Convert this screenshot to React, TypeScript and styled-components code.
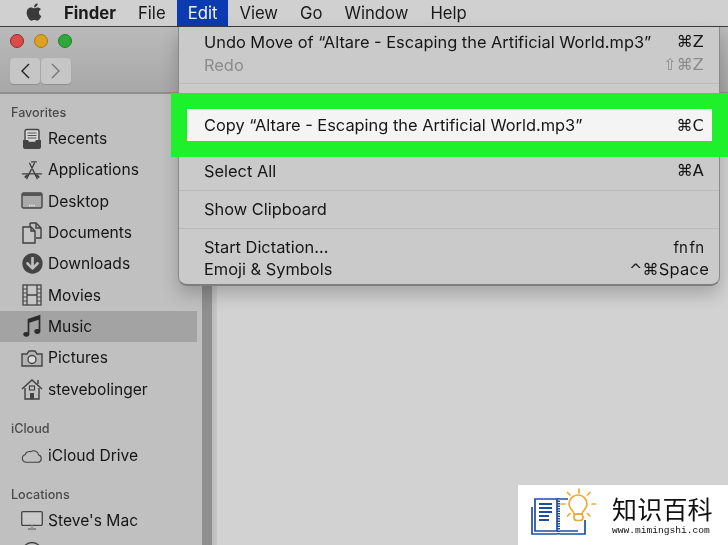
import React from "react";
import styled, { createGlobalStyle } from "styled-components";
import { FaApple, FaArrowCircleDown } from "react-icons/fa";

const Global = createGlobalStyle`
  html, body { margin: 0; padding: 0; background: #cfcfcf; }
  #root { width: 728px; height: 545px; overflow: hidden; position: relative; }
  * { box-sizing: border-box; }
`;

const Page = styled.div`
  width: 728px;
  height: 545px;
  display: flex;
  flex-direction: column;
  position: relative;
  overflow: hidden;
  background: #cfcfcf;
  color: #141414;
  font-family: Inter, "Liberation Sans", sans-serif;
  filter: blur(0.3px);
`;

const MenuBar = styled.div`
  height: 26px;
  flex: none;
  display: flex;
  align-items: stretch;
  padding-left: 25px;
  background: #d0d0d0;
  font-size: 16.7px;
`;

const AppleMark = styled.div`
  width: 29px;
  display: flex;
  align-items: center;
  color: #3a3a3a;
  font-size: 20px;
  margin-top: -2px;
  margin-left: -1px;
  padding-right: 0;
  flex: none;
`;

const MenuTitle = styled.div<{ $bold?: boolean; $active?: boolean }>`
  display: flex;
  align-items: center;
  padding: 0 11px;
  font-weight: ${(p) => (p.$bold ? 700 : 400)};
  background: ${(p) => (p.$active ? "#0c3ab0" : "transparent")};
  color: ${(p) => (p.$active ? "#f2f2f2" : "#1a1a1a")};
`;

const Window = styled.div`
  flex: 1;
  display: flex;
  flex-direction: column;
  min-height: 0;
  border-top: 1px solid #3c3c3c;
`;

const Toolbar = styled.div`
  height: 67px;
  flex: none;
  padding: 7px 10px 0;
  background: linear-gradient(#bababa, #a8a8a8);
  border-bottom: 2px solid #8f8f8f;
  display: flex;
  flex-direction: column;
  gap: 10px;
`;

const Lights = styled.div`
  display: flex;
  gap: 10px;
`;

const Light = styled.div<{ $c: string; $b: string }>`
  width: 14px;
  height: 14px;
  border-radius: 50%;
  background: ${(p) => p.$c};
  border: 1px solid ${(p) => p.$b};
`;

const NavGroup = styled.div`
  display: flex;
  gap: 1px;
`;

const NavButton = styled.div`
  width: 30px;
  height: 26px;
  border-radius: 4px;
  background: #c6c6c6;
  box-shadow: 0 1px 1px #8e8e8e;
  display: flex;
  align-items: center;
  justify-content: center;
`;

const Main = styled.div`
  flex: 1;
  display: flex;
  min-height: 0;
`;

const Sidebar = styled.div`
  width: 202px;
  flex: none;
  background: #c0c0c0;
  padding-top: 11px;
  display: flex;
  flex-direction: column;
`;

const Heading = styled.div<{ $gap?: number; $mb?: number }>`
  height: 16px;
  line-height: 16px;
  padding-left: 11px;
  margin-top: ${(p) => p.$gap ?? 0}px;
  margin-bottom: ${(p) => p.$mb ?? 2}px;
  font-size: 12.6px;
  font-weight: 500;
  color: #4a4a4a;
`;

const SideRow = styled.div<{ $selected?: boolean }>`
  height: 31.3px;
  flex: none;
  margin-right: 5px;
  padding-left: 21px;
  display: flex;
  align-items: center;
  gap: 5px;
  font-size: 15.6px;
  background: ${(p) => (p.$selected ? "#a3a3a3" : "transparent")};
  color: #161616;
`;

const IconSlot = styled.div`
  width: 22px;
  height: 22px;
  flex: none;
  display: flex;
  align-items: center;
  justify-content: center;
  color: #444;
`;

const Splitter = styled.div`
  width: 15px;
  flex: none;
  background: linear-gradient(to right, #8f8f8f 0, #8f8f8f 10px, #bdbdbd 10px, #c6c6c6 15px);
`;

const Content = styled.div`
  flex: 1;
  background: #d2d2d2;
`;

const Dropdown = styled.div`
  position: absolute;
  left: 178px;
  top: 27px;
  width: 542px;
  height: 259px;
  padding-top: 3px;
  background: #cacaca;
  border-radius: 0 0 9px 9px;
  border-left: 1px solid #8a8a8a;
  border-right: 1px solid #8a8a8a;
  border-bottom: 2px solid #7e7e7e;
  box-shadow: 0 8px 18px rgba(0, 0, 0, 0.22);
  font-size: 16.4px;
`;

const Item = styled.div<{ $h?: number; $dim?: boolean }>`
  height: ${(p) => p.$h ?? 23}px;
  display: flex;
  align-items: center;
  justify-content: space-between;
  padding: 0 15px 0 25px;
  color: ${(p) => (p.$dim ? "#8b8b8b" : "#161616")};
`;

const Highlighted = styled(Item)`
  height: 32px;
  margin: 25px 7px 18px 8px;
  padding: 0 8px 0 17px;
  background: #f4f4f4;
  box-shadow: 0 0 0 16px #1ff02c;
  position: relative;
`;

const Separator = styled.div<{ $mt?: number; $mb?: number }>`
  height: 1px;
  background: #bababa;
  margin-top: ${(p) => p.$mt ?? 8}px;
  margin-bottom: ${(p) => p.$mb ?? 6}px;
`;

const Shortcut = styled.span<{ $shift?: number }>`
  font-family: "DejaVu Sans", Inter, sans-serif;
  font-size: 16px;
  margin-right: ${(p) => -(p.$shift ?? 0)}px;
  letter-spacing: 0.2px;
`;

const Latin = styled.span`
  font-family: Inter, "Liberation Sans", sans-serif;
  font-size: 16.5px;
`;

const FnKeys = styled.span`
  font-family: Inter, "Liberation Sans", sans-serif;
  font-size: 15px;
  word-spacing: -2.5px;
  margin-right: 0;
`;

const Watermark = styled.div`
  position: absolute;
  right: 0;
  bottom: 0;
  width: 210px;
  height: 60px;
  background: #fff;
  display: flex;
  align-items: center;
  padding-left: 12px;
  gap: 16px;
`;

const BrandText = styled.div`
  display: flex;
  flex-direction: column;
  color: #111;
`;

const BrandName = styled.div`
  font-family: "Noto Sans CJK SC", sans-serif;
  font-size: 25px;
  line-height: 28px;
  letter-spacing: 0.2px;
  font-weight: 400;
`;

const BrandUrl = styled.div`
  font-family: "Liberation Mono", monospace;
  font-size: 9.6px;
  line-height: 12px;
  margin-top: 3px;
`;

const stroke = { fill: "none", stroke: "#3f3f3f", strokeWidth: 1.4 };

const Recents = () => (
  <svg width="20" height="22" viewBox="0 0 20 22">
    <rect x="3" y="1.5" width="14" height="13" rx="1.5" fill="#d8d8d8" stroke="#444" strokeWidth="1.4" />
    <path d="M5.5 5h9M5.5 7.5h9M5.5 10h9" stroke="#555" strokeWidth="1.1" />
    <path d="M1 12h5l1 2h6l1-2h5v7a2 2 0 0 1-2 2H3a2 2 0 0 1-2-2z" fill="#444" />
  </svg>
);
const Apps = () => (
  <svg width="23" height="22" viewBox="0 0 23 22">
    <path d="M6 20 L14 4M17 20 L9 4M1.5 15h20M11 2.5h5" {...stroke} strokeLinecap="round" />
    <path d="M4 19l3-3M19 19l-3-3" {...stroke} strokeWidth={2} />
  </svg>
);
const Desktop = () => (
  <svg width="22" height="18" viewBox="0 0 22 18">
    <rect x="1" y="1" width="20" height="15" rx="1.5" fill="#aaa" stroke="#444" strokeWidth="1.4" />
    <rect x="1" y="1" width="20" height="3" fill="#555" />
    <path d="M8 13.5h6" stroke="#eee" strokeWidth="1.3" strokeDasharray="1.3 1" />
  </svg>
);
const Documents = () => (
  <svg width="20" height="22" viewBox="0 0 20 22">
    <path d="M8 1h6l5 5v10h-5M8 1v4" {...stroke} />
    <path d="M14 1v5h5" {...stroke} />
    <path d="M1 5h8l4 4v12H1z" fill="#c6c6c6" stroke="#3f3f3f" strokeWidth="1.4" />
    <path d="M9 5v4h4" {...stroke} />
  </svg>
);
const Movies = () => (
  <svg width="20" height="22" viewBox="0 0 20 22">
    <rect x="1" y="1" width="18" height="20" fill="#c8c8c8" stroke="#444" strokeWidth="1.3" />
    <path d="M5 1v20M15 1v20M5 11h10" stroke="#444" strokeWidth="1.3" />
    <path d="M1 5h4M1 9h4M1 13h4M1 17h4M15 5h4M15 9h4M15 13h4M15 17h4" stroke="#444" strokeWidth="1" />
  </svg>
);
const Music = () => (
  <svg width="18" height="24" viewBox="0 0 18 24">
    <path d="M5.5 20V5.5L16.5 2v15" fill="none" stroke="#2c2c2c" strokeWidth="1.7" />
    <path d="M5.5 5.5L16.5 2v3.5L5.5 9z" fill="#2c2c2c" />
    <ellipse cx="3.3" cy="20.3" rx="3" ry="2.4" fill="#2c2c2c" />
    <ellipse cx="14.3" cy="17.5" rx="3" ry="2.4" fill="#2c2c2c" />
  </svg>
);
const Camera = () => (
  <svg width="22" height="18" viewBox="0 0 22 18">
    <path d="M1 5h5l2-3h6l2 3h5v12H1z" fill="#b5b5b5" stroke="#444" strokeWidth="1.4" />
    <circle cx="11" cy="10.5" r="4" fill="#ddd" stroke="#444" strokeWidth="1.4" />
  </svg>
);
const Home = () => (
  <svg width="22" height="22" viewBox="0 0 22 22">
    <path d="M1 11L11 2l10 9" {...stroke} />
    <path d="M17 2v4" {...stroke} />
    <path d="M4 10v11h14V10" {...stroke} />
    <rect x="8.5" y="8" width="5" height="4" {...stroke} strokeWidth={1.1} />
    <rect x="9" y="15" width="4" height="6" fill="#444" />
  </svg>
);
const Cloud = () => (
  <svg width="23" height="17" viewBox="0 0 23 17">
    <path d="M5 15.5a4 4 0 0 1-.8-7.8 5 5 0 0 1 6-3.2 5.5 5.5 0 0 1 8.3 3.6 3.8 3.8 0 0 1-.5 7.4z" {...stroke} strokeWidth={1.1} />
  </svg>
);
const Mac = () => (
  <svg width="22" height="20" viewBox="0 0 22 20">
    <rect x="0.7" y="0.7" width="20.6" height="13.6" rx="1.2" fill="#c9c9c9" stroke="#444" strokeWidth="1.3" />
    <path d="M7 18h8" stroke="#777" strokeWidth="1.5" />
    <path d="M10 14.5h2V18h-2z" fill="#999" />
  </svg>
);
const Drive = () => (
  <svg width="22" height="22" viewBox="0 0 22 22">
    <circle cx="11" cy="11" r="9.5" fill="#c4c4c4" stroke="#444" strokeWidth="1.3" />
  </svg>
);

const Logo = () => (
  <svg width="66" height="56" viewBox="0 0 66 56" style={{ flex: "none" }}>
    <g fill="none" stroke="#1f4ea0" strokeWidth="1.7">
      <path d="M5 12h22v32H5z" />
      <path d="M2 20v27h25M30 47h25V33M30 12h8M30 44h18" />
      <path d="M9 17h13M9 21h13M9 25h13M9 29h10M9 33h10" strokeWidth="2" />
      <path d="M28.5 11v37" strokeWidth="3" strokeDasharray="1.5 1" />
    </g>
    <g fill="none" stroke="#f0a830" strokeWidth="1.7">
      <path d="M44 27c0-3-5-5-5-10a9 9 0 0 1 18 0c0 5-5 7-5 10z" />
      <rect x="44" y="27" width="9" height="6.5" rx="3" />
      <path d="M49 2v4M37.5 5.500l2.500 2.500M60 5.500l-2.500 2.500M31 17h4M62 17h4M37.500 29l2.500-2.500M60 29l-2.500-2.500" strokeLinecap="round" />
    </g>
  </svg>
);

const rows: [string, React.ReactNode, boolean?][] = [
  ["Recents", <Recents />],
  ["Applications", <Apps />],
  ["Desktop", <Desktop />],
  ["Documents", <Documents />],
  ["Downloads", <FaArrowCircleDown size={21} />],
  ["Movies", <Movies />],
  ["Music", <Music />, true],
  ["Pictures", <Camera />],
  ["stevebolinger", <Home />],
];

export default function App() {
  return (
    <Page>
      <Global />
      <MenuBar>
        <AppleMark>
          <FaApple />
        </AppleMark>
        <MenuTitle $bold>Finder</MenuTitle>
        <MenuTitle>File</MenuTitle>
        <MenuTitle $active>Edit</MenuTitle>
        <MenuTitle>View</MenuTitle>
        <MenuTitle>Go</MenuTitle>
        <MenuTitle>Window</MenuTitle>
        <MenuTitle>Help</MenuTitle>
      </MenuBar>
      <Window>
        <Toolbar>
          <Lights>
            <Light $c="#dc4a4a" $b="#8e2c2c" />
            <Light $c="#dca022" $b="#a67a1a" />
            <Light $c="#2ea83a" $b="#23802c" />
          </Lights>
          <NavGroup>
            <NavButton>
              <svg width="12" height="18" viewBox="0 0 12 18">
                <path d="M10 2L3 9l7 7" fill="none" stroke="#222" strokeWidth="1.4" />
              </svg>
            </NavButton>
            <NavButton>
              <svg width="12" height="18" viewBox="0 0 12 18">
                <path d="M2 2l7 7-7 7" fill="none" stroke="#777" strokeWidth="1.4" />
              </svg>
            </NavButton>
          </NavGroup>
        </Toolbar>
        <Main>
          <Sidebar>
            <Heading>Favorites</Heading>
            {rows.map(([label, icon, sel]) => (
              <SideRow key={label} $selected={sel}>
                <IconSlot>{icon}</IconSlot>
                {label}
              </SideRow>
            ))}
            <Heading $gap={16} $mb={3}>iCloud</Heading>
            <SideRow>
              <IconSlot>
                <Cloud />
              </IconSlot>
              iCloud Drive
            </SideRow>
            <Heading $gap={16} $mb={2}>Locations</Heading>
            <SideRow>
              <IconSlot>
                <Mac />
              </IconSlot>
              Steve's Mac
            </SideRow>
            <SideRow>
              <IconSlot>
                <Drive />
              </IconSlot>
            </SideRow>
          </Sidebar>
          <Splitter />
          <Content />
        </Main>
      </Window>
      <Dropdown>
        <Item>
          <span>Undo Move of “Altare - Escaping the Artificial World.mp3”</span>
          <Shortcut>⌘Z</Shortcut>
        </Item>
        <Item $dim>
          <span>Redo</span>
          <Shortcut>⇧⌘Z</Shortcut>
        </Item>
        <Separator $mt={7} $mb={0} />
        <Highlighted>
          <span>Copy “Altare - Escaping the Artificial World.mp3”</span>
          <Shortcut>⌘C</Shortcut>
        </Highlighted>
        <Item>
          <span>Select All</span>
          <Shortcut>⌘A</Shortcut>
        </Item>
        <Separator />
        <Item>
          <span>Show Clipboard</span>
        </Item>
        <Separator $mb={7} />
        <Item $h={22}>
          <span>Start Dictation...</span>
          <FnKeys>fn fn</FnKeys>
        </Item>
        <Item $h={22}>
          <span>Emoji &amp; Symbols</span>
          <Shortcut $shift={5}>
            ^⌘<Latin>Space</Latin>
          </Shortcut>
        </Item>
      </Dropdown>
      <Watermark>
        <Logo />
        <BrandText>
          <BrandName>知识百科</BrandName>
          <BrandUrl>www.mimingshi.com</BrandUrl>
        </BrandText>
      </Watermark>
    </Page>
  );
}
